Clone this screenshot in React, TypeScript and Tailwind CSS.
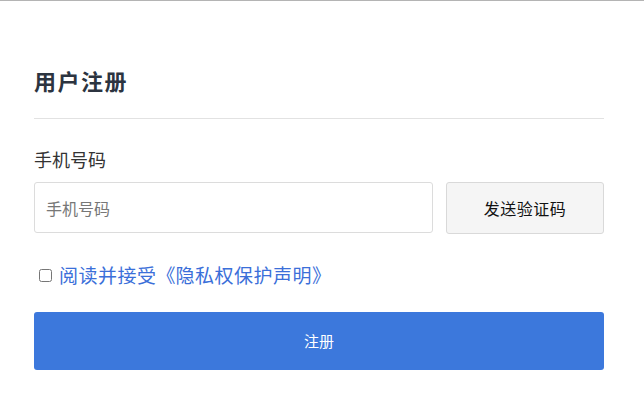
import React from "react";

const font = { fontFamily: '"Noto Sans CJK SC", "Noto Sans", sans-serif' };

export default function App() {
  return (
    <div className="w-[644px] h-[413px] bg-white border-t border-[#b4b4b4]" style={font}>
      <div className="w-[570px] ml-[34px] pt-[64px]">
        {/* Title */}
        <h1 className="text-[22px] leading-[30px] font-bold text-[#2c3440] tracking-[1.5px]">用户注册</h1>
        <div className="mt-[23px] h-px bg-[#e2e2e2]" />

        {/* Phone */}
        <label className="block mt-[27px] text-[18px] leading-[26px] text-[#333]">手机号码</label>
        <div className="mt-[10px] flex gap-[13px]">
          <input
            placeholder="手机号码"
            className="w-[399px] h-[51px] px-[11px] border border-[#dcdcdc] rounded-[3px] text-[16px] text-[#333] placeholder:text-[#777] outline-none"
          />
          <button className="flex-1 h-[52px] border border-[#d9d9d9] rounded-[3px] bg-[#f5f5f5] text-[16px] text-[#111] tracking-[0.5px]">
            发送验证码
          </button>
        </div>

        {/* Agreement */}
        <div className="mt-[28px] flex items-center">
          <input type="checkbox" className="ml-[5px] w-[13px] h-[13px] mr-[7px] accent-[#888]" />
          <a className="text-[19px] leading-[26px] text-[#3b6fd9] cursor-pointer tracking-[0.5px]">
            阅读并接受<span className="inline-block w-[19px] text-right">《</span>隐私权保护声明》
          </a>
        </div>

        {/* Submit */}
        <button className="mt-[24px] w-full h-[58px] rounded-[3px] bg-[#3c78dc] text-white text-[15px]">注册</button>
      </div>
    </div>
  );
}
